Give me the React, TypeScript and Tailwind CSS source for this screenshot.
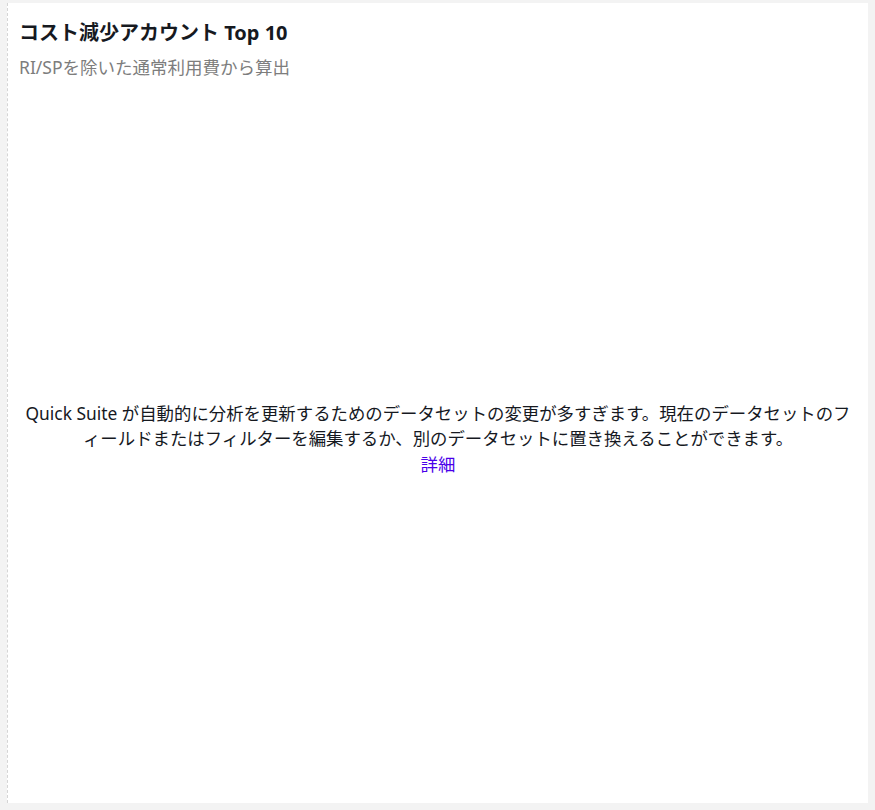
export default function App() {
  return (
    <div
      className="flex h-[810px] w-[875px] bg-[#f3f3f3] pb-[7px] pl-[7px] pr-[7px] pt-[3px] text-[#16191f]"
      style={{ fontFamily: '"Noto Sans", "Noto Sans CJK JP", sans-serif' }}
    >
      <div className="flex min-w-0 flex-1 flex-col border-l border-dashed border-[#d5d5d5] bg-white">
        <div className="px-[11px] pt-[16px]">
          <h2 className="text-[20px] font-bold leading-[28px]">コスト減少アカウント Top 10</h2>
          <p className="mt-[8px] text-[17.5px] leading-[24px] text-[#7d7d7d]">RI/SPを除いた通常利用費から算出</p>
        </div>
        <div className="flex flex-1 flex-col items-center justify-center px-[14px] pb-[4px]">
          <p className="text-center text-[17.4px] leading-[25.5px]">
            Quick Suite が自動的に分析を更新するためのデータセットの変更が多すぎます。現在のデータセットのフィールドまたはフィルターを編集するか、別のデータセットに置き換えることができます。
            <br />
            <a className="text-[#4a00ea]" href="#">詳細</a>
          </p>
        </div>
      </div>
    </div>
  );
}
